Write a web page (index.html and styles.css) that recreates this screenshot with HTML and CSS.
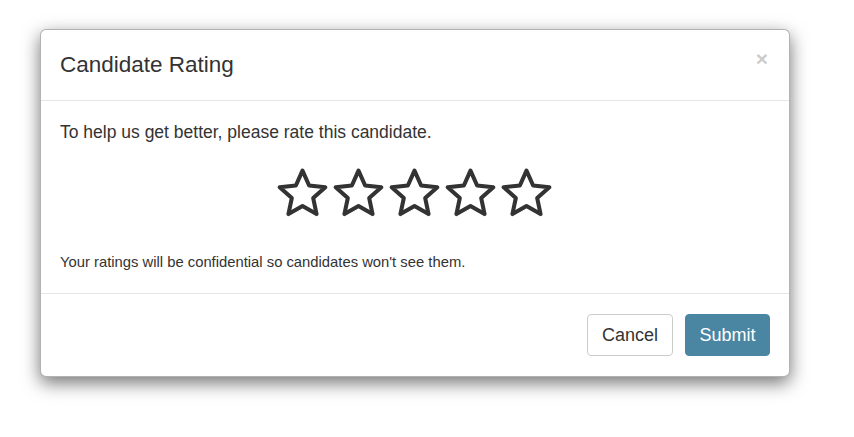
FILE: index.html
```html
<!DOCTYPE html>
<html>
<head>
<meta charset="utf-8">
<link rel="stylesheet" href="styles.css">
</head>
<body>
<div class="modal">
  <div class="modal-header">
    <h4 class="modal-title">Candidate Rating</h4>
    <span class="close">&times;</span>
  </div>
  <div class="modal-body">
    <p class="lead">To help us get better, please rate this candidate.</p>
    <div class="stars">
      <svg class="star" viewBox="0 0 52 50"><polygon points="26,3 32.5,17.6 48.4,19.3 36.5,30 39.8,45.7 26,37.7 12.2,45.7 15.5,30 3.6,19.3 19.5,17.6"/></svg>
      <svg class="star" viewBox="0 0 52 50"><polygon points="26,3 32.5,17.6 48.4,19.3 36.5,30 39.8,45.7 26,37.7 12.2,45.7 15.5,30 3.6,19.3 19.5,17.6"/></svg>
      <svg class="star" viewBox="0 0 52 50"><polygon points="26,3 32.5,17.6 48.4,19.3 36.5,30 39.8,45.7 26,37.7 12.2,45.7 15.5,30 3.6,19.3 19.5,17.6"/></svg>
      <svg class="star" viewBox="0 0 52 50"><polygon points="26,3 32.5,17.6 48.4,19.3 36.5,30 39.8,45.7 26,37.7 12.2,45.7 15.5,30 3.6,19.3 19.5,17.6"/></svg>
      <svg class="star" viewBox="0 0 52 50"><polygon points="26,3 32.5,17.6 48.4,19.3 36.5,30 39.8,45.7 26,37.7 12.2,45.7 15.5,30 3.6,19.3 19.5,17.6"/></svg>
    </div>
    <p class="note">Your ratings will be confidential so candidates won't see them.</p>
  </div>
  <div class="modal-footer">
    <button class="btn btn-default">Cancel</button>
    <button class="btn btn-primary">Submit</button>
  </div>
</div>
</body>
</html>
```
FILE: styles.css
```css
html, body {
  margin: 0;
  padding: 0;
  background: #fff;
}
body {
  font-family: "Liberation Sans", Arial, Helvetica, sans-serif;
  color: #333;
  min-height: 437px;
  padding-top: 29px;
  box-sizing: border-box;
}
.modal {
  margin: 0 0 0 40px;
  width: 748px;
  background: #fff;
  border: 1px solid rgba(0,0,0,0.3);
  border-radius: 6px;
  box-shadow: 0 6px 18px rgba(0,0,0,0.55);
}
.modal-header {
  display: flex;
  justify-content: space-between;
  align-items: flex-start;
  padding: 19px 19px 19px 19px;
  border-bottom: 1px solid #e5e5e5;
}
.modal-title {
  margin: 0;
  font-size: 22.5px;
  font-weight: normal;
  line-height: 32px;
}
.close {
  font-size: 21px;
  font-weight: bold;
  line-height: 1;
  color: #000;
  opacity: 0.2;
  margin-top: -1px;
  margin-right: 2px;
}
.modal-body {
  padding: 20px 19px 21px 19px;
}
.lead {
  margin: 0;
  font-size: 17.5px;
  line-height: 22px;
}
.stars {
  display: flex;
  justify-content: center;
  gap: 3px;
  margin: 24px 0 0 0;
  padding-right: 2px;
}
.star {
  width: 53px;
  height: 52px;
  fill: none;
  stroke: #333;
  stroke-width: 4;
  stroke-linejoin: round;
}
.note {
  margin: 33px 0 0 0;
  font-size: 14.8px;
  line-height: 20px;
}
.modal-footer {
  display: flex;
  justify-content: flex-end;
  gap: 12px;
  padding: 20px 19px 20px 19px;
  border-top: 1px solid #e5e5e5;
}
.btn {
  font-family: "Liberation Sans", Arial, Helvetica, sans-serif;
  font-size: 18px;
  line-height: 22px;
  padding: 9px 14px;
  border-radius: 4px;
  border: 1px solid transparent;
  cursor: pointer;
}
.btn-default {
  background: #fff;
  color: #333;
  border-color: #ccc;
}
.btn-primary {
  padding: 9px 13.5px;
  background: #4a86a2;
  color: #fff;
  border-color: #4a86a2;
}
```
